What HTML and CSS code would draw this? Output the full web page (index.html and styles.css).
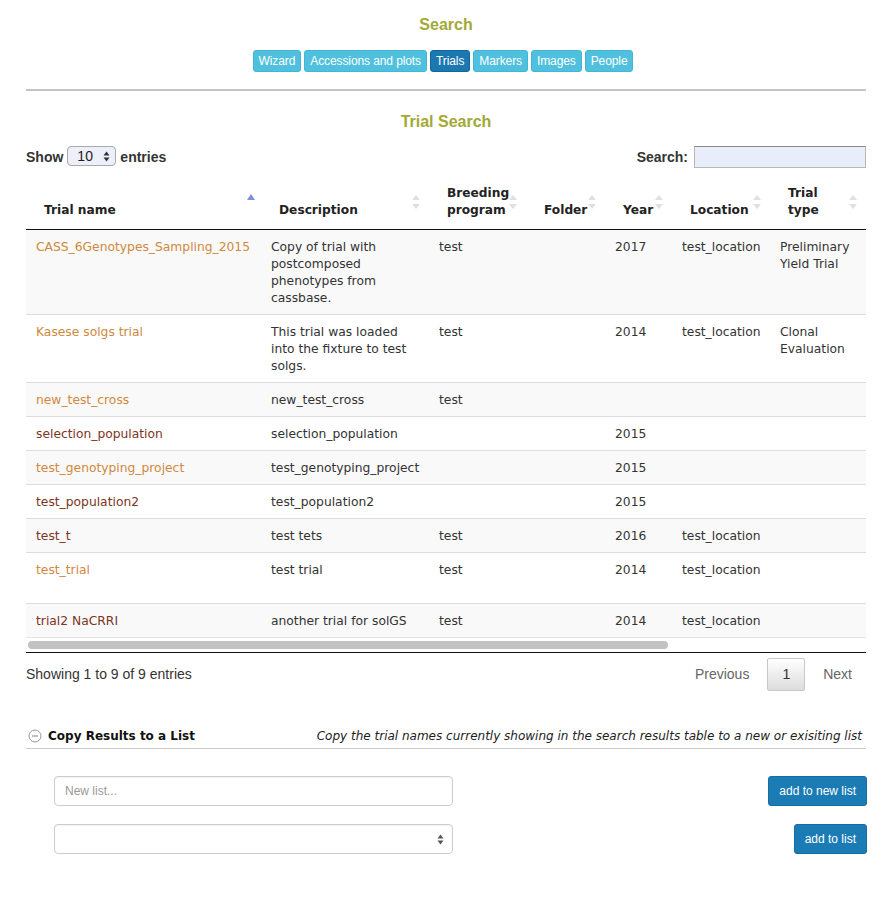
FILE: index.html
```html
<!DOCTYPE html>
<html>
<head>
<meta charset="utf-8">
<link rel="stylesheet" href="styles.css">
</head>
<body>
<div class="page">
  <h1 class="title">Search</h1>
  <div class="nav">
    <span class="nbtn">Wizard</span>
    <span class="nbtn">Accessions and plots</span>
    <span class="nbtn active">Trials</span>
    <span class="nbtn">Markers</span>
    <span class="nbtn">Images</span>
    <span class="nbtn">People</span>
  </div>
  <div class="rule"></div>
  <h2 class="subtitle">Trial Search</h2>

  <div class="controls">
    <div class="length">Show
      <span class="lsel">10<svg class="arr" width="7" height="11" viewBox="0 0 7 11"><path d="M3.5 0.5 L6.5 4.5 L0.5 4.5 Z M3.5 10.5 L6.5 6.5 L0.5 6.5 Z" fill="#333"/></svg></span>
      entries</div>
    <div class="filter">Search: <span class="sinput"></span></div>
  </div>

  <div class="scroller">
    <table class="dt">
      <colgroup>
        <col class="c1"><col class="c2"><col class="c3"><col class="c4"><col class="c5"><col class="c6"><col class="c7">
      </colgroup>
      <thead>
        <tr>
          <th class="asc">Trial name</th>
          <th class="both">Description</th>
          <th class="both">Breeding program</th>
          <th class="both">Folder</th>
          <th class="both">Year</th>
          <th class="both">Location</th>
          <th class="both">Trial type</th>
        </tr>
      </thead>
      <tbody>
        <tr class="odd"><td><span class="lk">CASS_6Genotypes_Sampling_2015</span></td><td>Copy of trial with postcomposed phenotypes from cassbase.</td><td>test</td><td></td><td>2017</td><td>test_location</td><td>Preliminary Yield Trial</td></tr>
        <tr><td><span class="lk">Kasese solgs trial</span></td><td>This trial was loaded into the fixture to test solgs.</td><td>test</td><td></td><td>2014</td><td>test_location</td><td>Clonal Evaluation</td></tr>
        <tr class="odd"><td><span class="lk">new_test_cross</span></td><td>new_test_cross</td><td>test</td><td></td><td></td><td></td><td></td></tr>
        <tr><td><span class="vk">selection_population</span></td><td>selection_population</td><td></td><td></td><td>2015</td><td></td><td></td></tr>
        <tr class="odd"><td><span class="lk">test_genotyping_project</span></td><td>test_genotyping_project</td><td></td><td></td><td>2015</td><td></td><td></td></tr>
        <tr><td><span class="vk">test_population2</span></td><td>test_population2</td><td></td><td></td><td>2015</td><td></td><td></td></tr>
        <tr class="odd"><td><span class="vk">test_t</span></td><td>test tets</td><td>test</td><td></td><td>2016</td><td>test_location</td><td></td></tr>
        <tr class="tall"><td><span class="lk">test_trial</span></td><td>test trial</td><td>test</td><td></td><td>2014</td><td>test_location</td><td></td></tr>
        <tr class="odd"><td><span class="vk">trial2 NaCRRI</span></td><td>another trial for solGS</td><td>test</td><td></td><td>2014</td><td>test_location</td><td></td></tr>
      </tbody>
    </table>
    <div class="hscroll"><div class="thumb"></div></div>
  </div>

  <div class="info">
    <div class="showing">Showing 1 to 9 of 9 entries</div>
    <div class="paging">
      <span class="pg">Previous</span>
      <span class="pg cur">1</span>
      <span class="pg">Next</span>
    </div>
  </div>

  <div class="copyhead">
    <div class="ch-left">
      <svg class="minus" width="14" height="14" viewBox="0 0 14 14"><circle cx="7" cy="7" r="6" fill="#fff" stroke="#9a9a9a" stroke-width="1"/><line x1="4" y1="7" x2="10" y2="7" stroke="#9a9a9a" stroke-width="1.2"/></svg>
      <span class="ch-title">Copy Results to a List</span>
    </div>
    <div class="ch-desc">Copy the trial names currently showing in the search results table to a new or exisiting list</div>
  </div>

  <div class="formrow">
    <div class="finput"><span class="ph">New list...</span></div>
    <span class="pbtn">add to new list</span>
  </div>
  <div class="formrow second">
    <div class="finput"><svg class="sarr" width="7" height="11" viewBox="0 0 7 11"><path d="M3.5 0.5 L6.5 4.5 L0.5 4.5 Z M3.5 10.5 L6.5 6.5 L0.5 6.5 Z" fill="#555"/></svg></div>
    <span class="pbtn">add to list</span>
  </div>
</div>
</body>
</html>
```

FILE: styles.css
```css
* { box-sizing: border-box; }
body {
  margin: 0;
  background: #fff;
  font-family: "Liberation Sans", Arial, sans-serif;
  color: #333;
}
.page {
  width: 840px;
  margin-left: 26px;
}
.title {
  margin: 15px 0 0;
  font-size: 16px;
  line-height: 20px;
  font-weight: bold;
  color: #a2a936;
  text-align: center;
}
.nav {
  margin-top: 15px;
  display: flex;
  justify-content: center;
  gap: 3px;
  padding-right: 6px;
}
.nbtn {
  display: inline-block;
  background: #4fc0dd;
  border: 1px solid #43b6d6;
  color: #fff;
  font-size: 12px;
  line-height: 18px;
  padding: 1px 5px;
  border-radius: 3px;
  letter-spacing: -0.1px;
}
.nbtn.active {
  background: #1c78b1;
  border-color: #17669a;
}
.rule {
  margin-top: 17px;
  height: 2px;
  background: #c4c4c4;
}
.subtitle {
  margin: 21px 0 0;
  font-size: 16px;
  line-height: 20px;
  font-weight: bold;
  color: #a2a936;
  text-align: center;
}
.controls {
  margin-top: 14px;
  height: 22px;
  display: flex;
  justify-content: space-between;
  align-items: center;
  font-size: 14px;
  font-weight: bold;
  color: #333;
}
.length {
  display: flex;
  align-items: center;
  gap: 4px;
}
.lsel {
  display: inline-flex;
  align-items: center;
  justify-content: space-between;
  width: 49px;
  height: 20px;
  padding: 0 5px 0 9px;
  background: #eef0f9;
  border: 1px solid #a9a9a9;
  border-radius: 4px;
  font-weight: normal;
  font-size: 14px;
  color: #222;
  margin-top: -2px;
}
.filter {
  display: flex;
  align-items: center;
  gap: 6px;
}
.sinput {
  display: inline-block;
  width: 172px;
  height: 22px;
  background: #e9edf9;
  border: 1px solid #b8b8b8;
  border-top-color: #8a8a8a;
}
.scroller {
  margin-top: 7px;
  width: 840px;
  border-bottom: 1px solid #111;
}
.hscroll {
  height: 14px;
  padding: 3px 0 0 2px;
}
.thumb {
  width: 640px;
  height: 8px;
  border-radius: 4px;
  background: #c2c2c2;
}
.dt {
  table-layout: fixed;
  width: 840px;
  border-collapse: collapse;
  font-family: "DejaVu Sans", Verdana, sans-serif;
  font-size: 12.3px;
  color: #333;
}
.c1 { width: 235px; } .c2 { width: 168px; } .c3 { width: 97px; } .c4 { width: 79px; }
.c5 { width: 67px; } .c6 { width: 98px; } .c7 { width: 96px; }
.dt th {
  position: relative;
  text-align: left;
  vertical-align: bottom;
  font-weight: bold;
  font-size: 12.2px;
  line-height: 17px;
  padding: 10px 18px 10px 18px;
  border-bottom: 1px solid #111;
  color: #222;
}
.dt th::before, .dt th::after {
  content: "";
  position: absolute;
  right: 9px;
  width: 0; height: 0;
  border-left: 4px solid transparent;
  border-right: 4px solid transparent;
}
.dt th.both::before {
  top: 20px;
  border-bottom: 5px solid #e0e0e0;
}
.dt th.both::after {
  top: 29px;
  border-top: 5px solid #e0e0e0;
}
.dt th.asc::before {
  top: 19px;
  right: 6px;
  border-bottom: 6px solid #7b8fe0;
}
.dt th.asc::after { display: none; }
.dt td {
  vertical-align: top;
  padding: 9px 10px 7px;
  line-height: 17px;
  border-bottom: 1px solid #ddd;
}
.dt tr.tall td { padding-bottom: 24px; }
.dt tbody tr:last-child td { border-bottom: 1px solid #e4e4e4; }
.dt tr.odd td { background: #f9f9f9; }
.lk { color: #d0893d; }
.vk { color: #7d3522; }
.info {
  margin-top: 4px;
  height: 34px;
  display: flex;
  justify-content: space-between;
  align-items: center;
  font-size: 14px;
}
.showing { color: #333; margin-top: -1px; }
.paging {
  display: flex;
  align-items: center;
  margin-right: -1px;
}
.pg {
  display: inline-block;
  padding: 0 17px;
  color: #666;
  font-size: 14px;
  line-height: 31px;
  border: 1px solid transparent;
}
.pg.cur {
  padding: 0 14px;
  color: #333;
  border: 1px solid #c9c9c9;
  border-radius: 2px;
  background: linear-gradient(#fff, #dcdcdc);
}
.pg:last-child { padding-right: 14px; }
.copyhead {
  margin-top: 34px;
  height: 24px;
  display: flex;
  justify-content: space-between;
  align-items: center;
  border-bottom: 1px solid #ccc;
  font-family: "DejaVu Sans", Verdana, sans-serif;
  padding-bottom: 2px;
}
.ch-left {
  display: flex;
  align-items: center;
  gap: 6px;
  padding-left: 2px;
}
.ch-title {
  font-weight: bold;
  font-size: 12px;
  color: #111;
}
.ch-desc {
  font-style: italic;
  font-size: 12px;
  color: #222;
  padding-right: 4px;
}
.formrow {
  margin-top: 27px;
  display: flex;
  justify-content: space-between;
  align-items: center;
  padding-left: 28px;
  margin-right: -1px;
}
.formrow.second { margin-top: 18px; }
.finput {
  width: 399px;
  height: 30px;
  border: 1px solid #ccc;
  border-radius: 4px;
  background: #fff;
  display: flex;
  align-items: center;
  justify-content: flex-end;
  padding: 0 10px;
  box-shadow: inset 0 1px 1px rgba(0,0,0,0.05);
}
.ph {
  margin-right: auto;
  color: #999;
  font-size: 12px;
}
.sarr { margin-right: -2px; }
.pbtn {
  display: inline-block;
  height: 30px;
  padding: 0 10px;
  line-height: 28px;
  font-size: 12px;
  color: #fff;
  background: #1a7bb5;
  border: 1px solid #176ea3;
  border-radius: 3px;
}
```
